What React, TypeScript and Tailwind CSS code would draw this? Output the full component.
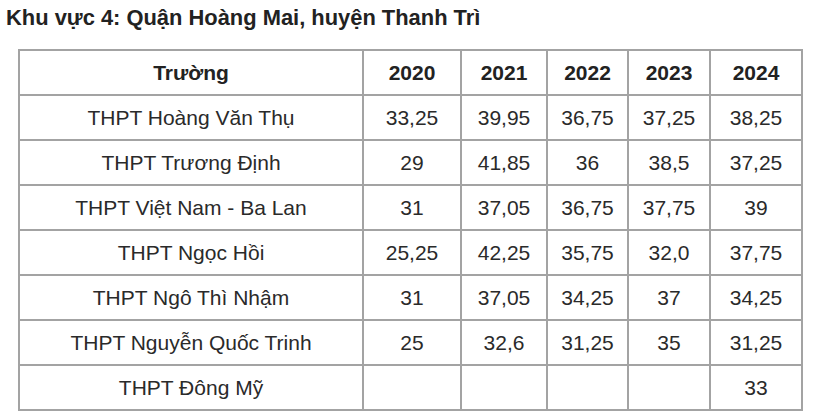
import React from 'react';

const rows: [string, string, string, string, string, string][] = [
  ['THPT Hoàng Văn Thụ', '33,25', '39,95', '36,75', '37,25', '38,25'],
  ['THPT Trương Định', '29', '41,85', '36', '38,5', '37,25'],
  ['THPT Việt Nam - Ba Lan', '31', '37,05', '36,75', '37,75', '39'],
  ['THPT Ngọc Hồi', '25,25', '42,25', '35,75', '32,0', '37,75'],
  ['THPT Ngô Thì Nhậm', '31', '37,05', '34,25', '37', '34,25'],
  ['THPT Nguyễn Quốc Trinh', '25', '32,6', '31,25', '35', '31,25'],
  ['THPT Đông Mỹ', '', '', '', '', '33'],
];

const years = ['2020', '2021', '2022', '2023', '2024'];
const widths = ['w-[344px]', 'w-[98px]', 'w-[86px]', 'w-[81px]', 'w-[82px]', 'w-[92px]'];

export default function App() {
  return (
    <div className="w-[820px] h-[414px] bg-white overflow-hidden font-['Liberation_Sans',Arial,sans-serif]">
      <h2 className="pl-[6px] pt-[2px] h-[49px] text-[21.9px] font-bold text-[#222]">
        Khu vực 4: Quận Hoàng Mai, huyện Thanh Trì
      </h2>
      <table className="ml-[18px] border-collapse table-fixed text-[21px] text-[#2a2a2a]">
        <colgroup>
          {widths.map((w, i) => (
            <col key={i} className={w} />
          ))}
        </colgroup>
        <thead>
          <tr className="h-[45px]">
            <th className="border-2 border-[#a3a3a3] text-center font-bold text-[#222]">Trường</th>
            {years.map((y) => (
              <th key={y} className="border-2 border-[#a3a3a3] text-center font-bold text-[#222]">
                {y}
              </th>
            ))}
          </tr>
        </thead>
        <tbody>
          {rows.map((r) => (
            <tr key={r[0]} className="h-[45px]">
              {r.map((c, i) => (
                <td key={i} className="border-2 border-[#a3a3a3] text-center p-0">
                  {c}
                </td>
              ))}
            </tr>
          ))}
        </tbody>
      </table>
    </div>
  );
}
